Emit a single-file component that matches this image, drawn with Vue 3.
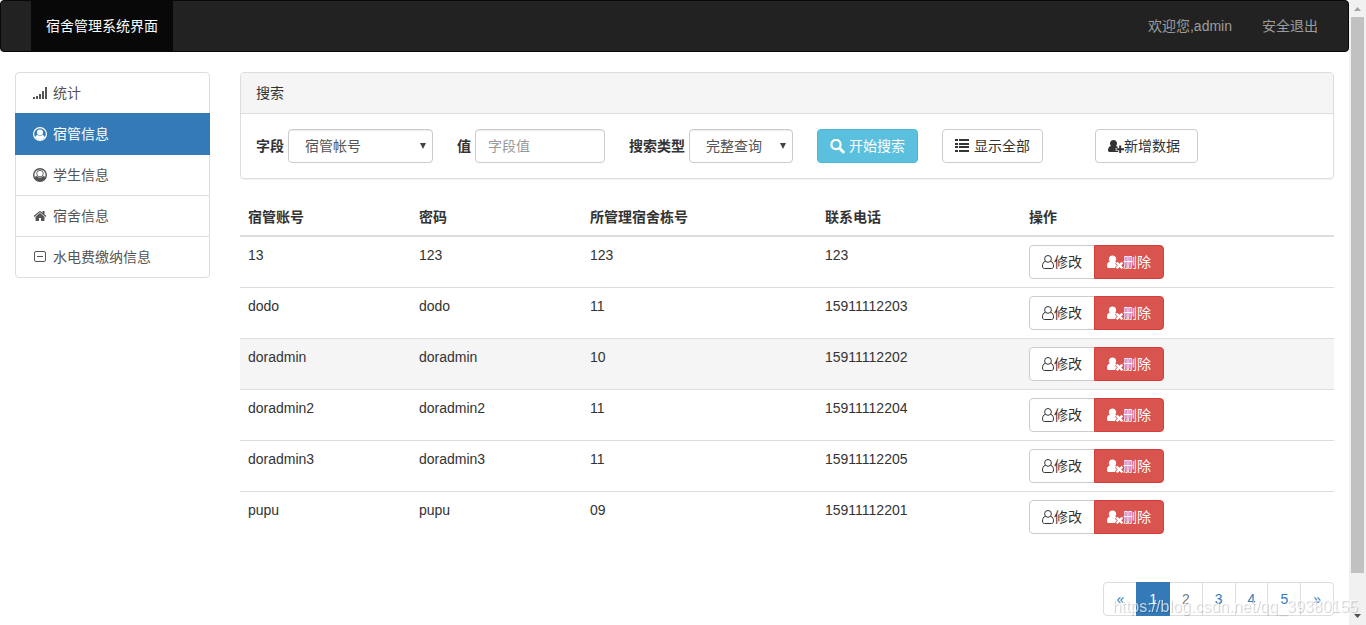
<script setup>
import { ref } from 'vue'

const active = ref('dorm-admin')
const menu = [
  { id: 'stats', label: '统计', icon: 'signal' },
  { id: 'dorm-admin', label: '宿管信息', icon: 'circle-light' },
  { id: 'students', label: '学生信息', icon: 'circle' },
  { id: 'dorms', label: '宿舍信息', icon: 'home' },
  { id: 'fees', label: '水电费缴纳信息', icon: 'minus' },
]

const field = ref('account')
const keyword = ref('')
const mode = ref('full')

const rows = [
  { account: '13', password: '123', building: '123', phone: '123' },
  { account: 'dodo', password: 'dodo', building: '11', phone: '15911112203' },
  { account: 'doradmin', password: 'doradmin', building: '10', phone: '15911112202', hover: true },
  { account: 'doradmin2', password: 'doradmin2', building: '11', phone: '15911112204' },
  { account: 'doradmin3', password: 'doradmin3', building: '11', phone: '15911112205' },
  { account: 'pupu', password: 'pupu', building: '09', phone: '15911112201' },
]

const pages = ['«', '1', '2', '3', '4', '5', '»']
</script>

<template>
  <div class="page">
    <nav class="navbar">
      <a class="brand" href="#">宿舍管理系统界面</a>
      <div class="nav-right">
        <a href="#">欢迎您,admin</a>
        <a href="#">安全退出</a>
      </div>
    </nav>

    <div class="layout">
      <aside class="side">
        <a
          v-for="item in menu"
          :key="item.id"
          href="#"
          class="side-item"
          :class="{ active: item.id === active }"
          @click.prevent="active = item.id"
        >
          <span class="side-icon">
            <svg v-if="item.icon === 'signal'" width="14" height="14" viewBox="0 0 14 14" fill="currentColor" shape-rendering="crispEdges">
              <path d="M0 11h2v2H0zM3 10h2v3H3zM6 8h2v5H6zM9 5h2v8H9zM12 1h2v12h-2z" />
            </svg>
            <svg v-else-if="item.icon === 'circle-light'" width="14" height="14" viewBox="0 0 14 14">
              <circle cx="7" cy="7" r="6.400" fill="none" stroke="currentColor" stroke-width="1.200" />
              <circle cx="7" cy="5.500" r="3" fill="currentColor" />
              <path d="M2.200 10.600C2.500 9 3.300 8 4.600 8a3.800 3.800 0 0 0 4.800 0c1.300 0 2.100 1 2.400 2.600A6 6 0 0 1 7 13a6 6 0 0 1-4.800-2.400z" fill="currentColor" />
            </svg>
            <svg v-else-if="item.icon === 'circle'" width="14" height="14" viewBox="0 0 14 14">
              <circle cx="7" cy="7" r="6.300" fill="none" stroke="currentColor" stroke-width="1.400" />
              <path d="M1.300 9.500C1.800 8.600 2.800 8.200 4 8c.6 1 1.700 1.500 3 1.500s2.400-.5 3-1.500c1.200.2 2.200.6 2.700 1.500L11 12.500 7 13.500 3 12.500z" fill="currentColor" />
              <circle cx="7" cy="5.600" r="3.300" fill="none" stroke="currentColor" stroke-width=".9" />
            </svg>
            <svg v-else-if="item.icon === 'home'" width="14" height="14" viewBox="0 0 1792 1792" fill="currentColor">
              <path d="M1472 992v480q0 26-19 45t-45 19h-384v-384h-256v384h-384q-26 0-45-19t-19-45v-480q0-1 .5-3t.5-3l575-474 575 474q1 2 1 6zm223-69l-62 74q-8 9-21 11h-3q-13 0-21-7l-692-577-692 577q-12 8-24 7-13-2-21-11l-62-74q-8-10-7-23.500t11-21.500l719-599q32-26 76-26t76 26l244 204v-195q0-14 9-23t23-9h192q14 0 23 9t9 23v408l219 182q10 8 11 21.500t-7 23.500z" />
            </svg>
            <svg v-else width="12" height="12" viewBox="0 0 12 12" fill="none" stroke="currentColor">
              <rect x=".5" y=".5" width="11" height="10" rx="1.500" />
              <path d="M3 5.500h6" />
            </svg>
          </span>
          <span>{{ item.label }}</span>
        </a>
      </aside>

      <main class="content">
        <section class="panel">
          <header class="panel-head">搜索</header>
          <form class="search" @submit.prevent>
            <div class="group">
              <label for="field">字段</label>
              <span class="select-wrap field-select">
                <select id="field" v-model="field">
                  <option value="account">宿管帐号</option>
                  <option value="building">所管理宿舍栋号</option>
                </select>
                <svg class="caret" width="6" height="6" viewBox="0 0 6 6"><path d="M0 0h6L3 6z" fill="currentColor" /></svg>
              </span>
            </div>
            <div class="group">
              <label for="keyword">值</label>
              <input id="keyword" v-model="keyword" type="text" placeholder="字段值" />
            </div>
            <div class="group">
              <label for="mode">搜索类型</label>
              <span class="select-wrap mode-select">
                <select id="mode" v-model="mode">
                  <option value="full">完整查询</option>
                  <option value="fuzzy">模糊查询</option>
                </select>
                <svg class="caret" width="6" height="6" viewBox="0 0 6 6"><path d="M0 0h6L3 6z" fill="currentColor" /></svg>
              </span>
            </div>
            <button type="submit" class="btn info spaced">
              <svg width="15" height="15" viewBox="0 0 15 15" fill="none" stroke="currentColor">
                <circle cx="6" cy="5.500" r="4.600" stroke-width="2.200" />
                <path d="M9.500 9.200l3.800 3.800" stroke-width="2.900" stroke-linecap="round" />
              </svg>
              开始搜索
            </button>
            <button type="button" class="btn spaced">
              <svg width="15" height="14" viewBox="0 0 15 14" fill="currentColor" shape-rendering="crispEdges">
                <path d="M0 0h3v2H0zM4 0h10v2H4zM0 4h3v2H0zM4 4h10v2H4zM0 7h3v2H0zM4 7h10v2H4zM0 11h3v2H0zM4 11h10v2H4z" />
              </svg>
              显示全部
            </button>
            <button type="button" class="btn add">
              <svg width="16" height="14" viewBox="0 0 16 14" fill="currentColor">
                <path d="M5.500 1a3.500 3.500 0 0 1 2.600 5.900c.5.100 1 .3 1.400.6V9H7.700v2.800h2.500V13H2C.7 13 0 12.300 0 11.200 0 8.900.9 7.200 2.900 6.900A3.500 3.500 0 0 1 5.500 1z" />
                <path d="M11.200 6.500h2v2.700H16v2h-2.800v2.700h-2v-2.700H8.500v-2h2.700z" />
              </svg>新增数据
            </button>
          </form>
        </section>

        <table>
          <colgroup>
            <col class="c-account" />
            <col class="c-password" />
            <col class="c-building" />
            <col class="c-phone" />
            <col />
          </colgroup>
          <thead>
            <tr>
              <th scope="col">宿管账号</th>
              <th scope="col">密码</th>
              <th scope="col">所管理宿舍栋号</th>
              <th scope="col">联系电话</th>
              <th scope="col">操作</th>
            </tr>
          </thead>
          <tbody>
            <tr v-for="row in rows" :key="row.account" :class="{ hover: row.hover }">
              <td>{{ row.account }}</td>
              <td>{{ row.password }}</td>
              <td>{{ row.building }}</td>
              <td>{{ row.phone }}</td>
              <td>
                <div class="btn-group">
                  <button type="button" class="btn">
                    <svg width="12" height="14" viewBox="0 0 12 14" fill="none" stroke="currentColor">
                      <circle cx="6" cy="3.900" r="3.400" />
                      <path d="M3.200 6.300C1.300 7 .5 8.800.5 11c0 1.600.7 2.500 2 2.500h7c1.300 0 2-.9 2-2.500 0-2.200-.8-4-2.700-4.700" />
                    </svg>修改
                  </button>
                  <button type="button" class="btn danger">
                    <svg width="16" height="14" viewBox="0 0 16 14" fill="currentColor">
                      <path d="M5.500 0.500a3.500 3.500 0 0 1 2.600 6c.6.100 1.100.3 1.500.7L8 8.700l1.800 1.800L8 12.300l.7.700H2C.7 13 0 12.300 0 11.200 0 8.500.9 6.800 2.900 6.500a3.500 3.500 0 0 1 2.600-6z" />
                      <path d="M10.500 6.800l2 2 2-2L16.200 8.500l-2 2 2 2-1.700 1.600-2-2-2 2-1.700-1.600 2-2-2-2z" />
                    </svg>删除
                  </button>
                </div>
              </td>
            </tr>
          </tbody>
        </table>

        <nav class="pagination" aria-label="分页">
          <a v-for="p in pages" :key="p" href="#" :class="{ current: p === '1', focus: p === '2' }">{{ p }}</a>
        </nav>
      </main>
    </div>

    <div class="watermark">https://blog.csdn.net/qq_39380155</div>

    <div class="scrollbar">
      <svg class="arrow-up" width="7" height="4" viewBox="0 0 7 4"><path d="M3.500 0L7 4H0z" fill="currentColor" /></svg>
      <div class="track"><div class="thumb"></div></div>
      <svg class="arrow-down" width="7" height="4" viewBox="0 0 7 4"><path d="M0 0h7L3.500 4z" fill="currentColor" /></svg>
    </div>
  </div>
</template>

<style>
body {
  margin: 0;
  background: #fff;
}
</style>

<style scoped>
* {
  box-sizing: border-box;
}
.page {
  position: relative;
  padding-right: 17px;
  min-height: 100vh;
  font: 14px/20px "Liberation Sans", "Noto Sans CJK SC", sans-serif;
  color: #333;
}
a {
  text-decoration: none;
}
svg {
  flex: none;
}
.navbar {
  display: flex;
  justify-content: space-between;
  padding: 0 15px 0 30px;
  margin-bottom: 20px;
  border: 1px solid #080808;
  border-radius: 4px;
  background: #222;
}
.navbar a {
  display: block;
  padding: 15px;
  color: #9d9d9d;
}
.navbar .brand {
  background: #080808;
  color: #fff;
}
.nav-right {
  display: flex;
}
.layout {
  display: flex;
  gap: 30px;
  padding: 0 15px;
}
.side {
  flex: none;
  width: 195px;
}
.side-item {
  display: flex;
  align-items: center;
  gap: 4px;
  padding: 10px 15px;
  margin-bottom: -1px;
  border: 1px solid #ddd;
  color: #555;
}
.side-item:first-child {
  border-radius: 4px 4px 0 0;
}
.side-item:last-child {
  border-radius: 0 0 4px 4px;
}
.side-item.active {
  position: relative;
  border-color: #337ab7;
  background: #337ab7;
  color: #fff;
}
.side-icon {
  display: flex;
  justify-content: center;
  width: 18px;
}
.content {
  flex: 1;
  min-width: 0;
}
.panel {
  margin-bottom: 20px;
  border: 1px solid #ddd;
  border-radius: 4px;
  box-shadow: 0 1px 1px rgba(0, 0, 0, 0.05);
}
.panel-head {
  padding: 10px 15px;
  border-bottom: 1px solid #ddd;
  border-radius: 3px 3px 0 0;
  background: #f5f5f5;
}
.search {
  display: flex;
  flex-wrap: wrap;
  gap: 24px;
  padding: 15px;
}
.group {
  display: flex;
  align-items: center;
  gap: 4px;
}
label {
  font-weight: 700;
}
input,
select {
  width: 100%;
  height: 34px;
  padding: 6px 12px;
  border: 1px solid #ccc;
  border-radius: 4px;
  background: #fff;
  box-shadow: inset 0 1px 1px rgba(0, 0, 0, 0.075);
  font: inherit;
  color: #555;
}
input {
  width: 130px;
}
input::placeholder {
  color: #999;
}
select {
  appearance: none;
  padding: 6px 16px;
}
.select-wrap {
  position: relative;
}
.field-select {
  width: 145px;
}
.mode-select {
  width: 104px;
}
.caret {
  position: absolute;
  top: 14px;
  right: 7px;
  pointer-events: none;
  color: #444;
}
.btn {
  display: inline-flex;
  align-items: center;
  height: 34px;
  padding: 6px 12px;
  border: 1px solid #ccc;
  border-radius: 4px;
  background: #fff;
  font: inherit;
  color: #333;
  white-space: nowrap;
  cursor: pointer;
}
.btn.spaced {
  gap: 4px;
}
.btn.info {
  border-color: #46b8da;
  background: #5bc0de;
  color: #fff;
}
.btn.add {
  margin-left: 28px;
  padding-right: 17px;
}
table {
  width: 100%;
  margin-bottom: 40px;
  border-collapse: collapse;
  table-layout: fixed;
}
.c-account,
.c-password {
  width: 15.63%;
}
.c-building {
  width: 21.48%;
}
.c-phone {
  width: 18.65%;
}
th,
td {
  padding: 8px;
  text-align: left;
  vertical-align: top;
}
th {
  border-bottom: 2px solid #ddd;
}
td {
  border-top: 1px solid #ddd;
}
tr.hover {
  background: #f5f5f5;
}
.btn-group {
  display: flex;
}
.btn-group .btn:first-child {
  border-radius: 4px 0 0 4px;
}
.btn-group .btn.danger {
  margin-left: -1px;
  border-color: #d43f3a;
  border-radius: 0 4px 4px 0;
  background: #d9534f;
  color: #fff;
}
.pagination {
  display: flex;
  justify-content: flex-end;
}
.pagination a {
  padding: 6px 12px;
  margin-left: -1px;
  border: 1px solid #ddd;
  color: #337ab7;
}
.pagination a:first-child {
  border-radius: 4px 0 0 4px;
}
.pagination a:last-child {
  border-radius: 0 4px 4px 0;
}
.pagination .current {
  position: relative;
  border-color: #337ab7;
  background: #337ab7;
  color: #fff;
}
.pagination .focus {
  color: #777;
}
.watermark {
  position: fixed;
  right: 8px;
  bottom: 8px;
  z-index: 2;
  font-size: 16px;
  color: rgba(255, 255, 255, 0.7);
  text-shadow: 1px 1px 1px rgba(0, 0, 0, 0.2);
  pointer-events: none;
}
.scrollbar {
  position: fixed;
  top: 0;
  right: 0;
  bottom: 0;
  display: flex;
  flex-direction: column;
  align-items: center;
  gap: 6px;
  width: 17px;
  padding: 7px 2px 7px 2px;
  background: #f1f1f1;
}
.track {
  flex: 1;
  width: 13px;
}
.thumb {
  height: 94%;
  background: #c1c1c1;
}
.arrow-up {
  color: #a3a3a3;
}
.arrow-down {
  color: #505050;
}
</style>
